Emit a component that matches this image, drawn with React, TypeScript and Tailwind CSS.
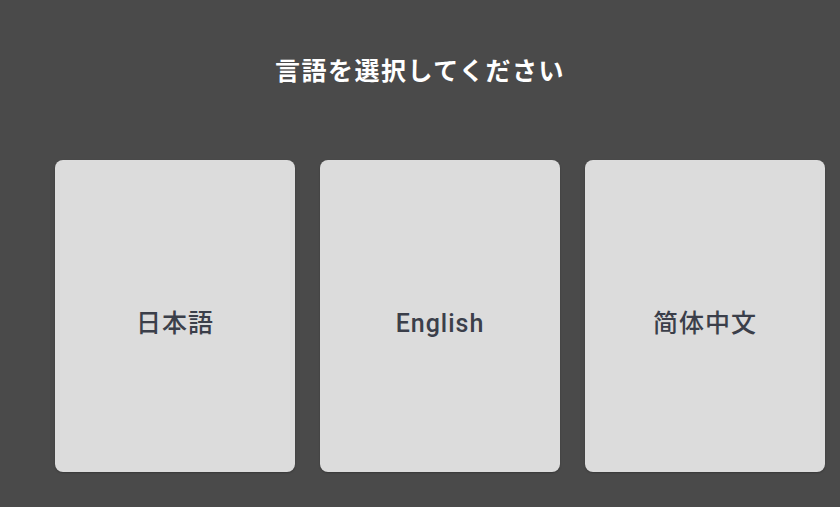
const languages = [
  { code: "ja", label: "日本語" },
  { code: "en", label: "English" },
  { code: "zh", label: "简体中文" },
];

export default function App() {
  return (
    <div
      className="h-[507px] w-[840px] overflow-hidden bg-[#4a4a4a]"
      style={{ fontFamily: 'Roboto, "Noto Sans CJK JP", sans-serif' }}
    >
      <h1 className="pt-[54px] text-center text-[25px] font-bold leading-9 tracking-[0.06em] text-white">
        言語を選択してください
      </h1>
      <div className="mt-[70px] flex gap-[25px] pl-[55px]">
        {languages.map((lang) => (
          <button
            key={lang.code}
            className="flex h-[312px] w-[240px] shrink-0 items-center justify-center rounded-lg bg-[#dcdcdc] pt-[16px] text-[25px] font-medium tracking-[0.04em] text-[#3b3f4a] shadow-[0_1px_2px_rgba(0,0,0,0.25)]"
          >
            {lang.label}
          </button>
        ))}
      </div>
    </div>
  );
}
